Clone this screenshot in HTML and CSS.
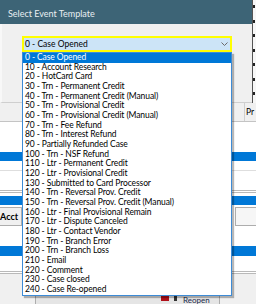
FILE: index.html
```html
<!DOCTYPE html>
<html lang="en">
<head>
    <meta charset="UTF-8">
    <meta name="viewport" content="width=device-width, initial-scale=1.0">
    <title>Select Event Template</title>

    <link rel="stylesheet" href="styles.css">
</head>
<body>
    <div class="app">
        <div class="app-top">
            <div class="edge">
                <span class="mark"></span>
                <span class="mark"></span>
                <span class="mark"></span>
                <span class="mark"></span>
                <span class="mark"></span>
                <span class="mark"></span>
                <span class="mark"></span>
            </div>
        </div>
        <div class="grid-head">
            <div class="head-cell">Pr</div>
        </div>
        <div class="blank b30"></div>
        <div class="sel-row"></div>
        <div class="blank b9 line-below"></div>
        <div class="blank b19"></div>
        <div class="dbl-line"></div>
        <div class="blank b3"></div>
        <div class="sel-row"></div>
        <div class="blank b2"></div>
        <div class="btn-row">
            <div class="acct">Acct</div>
            <div class="btn-right"></div>
        </div>
        <div class="blank b20"></div>
        <div class="sel-row tall"></div>
        <div class="blank b15"></div>
        <div class="dbl-line"></div>
        <div class="footer">
            <div class="foot-btn">
                <span class="x-icon"></span>
                <span class="doc-icon"></span>
                <span class="foot-text">Reopen</span>
            </div>
        </div>
    </div>

    <div class="dialog">
        <div class="titlebar">Select Event Template</div>
        <div class="dlg-body">
            <div class="combo">
                <span class="combo-text">0 - Case Opened</span>
                <svg class="chev" width="7" height="4" viewBox="0 0 7 4">
                    <polyline points="0.5,0.5 3.5,3.5 6.5,0.5" fill="none" stroke="#6b6b6b" stroke-width="1"/>
                </svg>
            </div>
        </div>
    </div>

    <div class="droplist">
        <div class="opt active">0 - Case Opened</div>
        <div class="opt">10 - Account Research</div>
        <div class="opt">20 - HotCard Card</div>
        <div class="opt">30 - Trn - Permanent Credit</div>
        <div class="opt">40 - Trn - Permanent Credit (Manual)</div>
        <div class="opt">50 - Trn - Provisional Credit</div>
        <div class="opt">60 - Trn - Provisional Credit (Manual)</div>
        <div class="opt">70 - Trn - Fee Refund</div>
        <div class="opt">80 - Trn - Interest Refund</div>
        <div class="opt">90 - Partially Refunded Case</div>
        <div class="opt">100 - Trn - NSF Refund</div>
        <div class="opt">110 - Ltr - Permanent Credit</div>
        <div class="opt">120 - Ltr - Provisional Credit</div>
        <div class="opt">130 - Submitted to Card Processor</div>
        <div class="opt">140 - Trn - Reversal Prov. Credit</div>
        <div class="opt">150 - Trn - Reversal Prov. Credit (Manual)</div>
        <div class="opt">160 - Ltr - Final Provisional Remain</div>
        <div class="opt">170 - Ltr - Dispute Canceled</div>
        <div class="opt">180 - Ltr - Contact Vendor</div>
        <div class="opt">190 - Trn - Branch Error</div>
        <div class="opt">200 - Trn - Branch Loss</div>
        <div class="opt">210 - Email</div>
        <div class="opt">220 - Comment</div>
        <div class="opt">230 - Case closed</div>
        <div class="opt">240 - Case Re-opened</div>
    </div>
</body>
</html>
```

FILE: styles.css
```css
body {
    margin: 0;
    width: 256px;
    height: 304px;
    overflow: hidden;
    position: relative;
    font-family: Lato, "Liberation Sans", Arial, sans-serif;
    font-size: 8.5px;
    color: #000;
}

/* the application behind the dialog */
.app {
    display: flex;
    flex-direction: column;
    height: 304px;
    background: #fff;
}

.app-top {
    height: 103px;
    flex: 0 0 auto;
    background: #f0f0f0;
    display: flex;
    justify-content: flex-end;
}

.edge {
    width: 3px;
    padding: 5px 0 0 1px;
    background: #f7f7f7;
    display: flex;
    flex-direction: column;
    gap: 11.5px;
}

.mark {
    width: 2px;
    height: 3px;
    background: #222;
}

.grid-head {
    height: 18px;
    flex: 0 0 auto;
    background: #f0f0f0;
    border-bottom: 1px solid #c4c4c4;
    display: flex;
    justify-content: flex-end;
}

.head-cell {
    width: 10px;
    border-left: 1px solid #cfcfcf;
    padding-left: 1px;
    line-height: 18px;
    white-space: nowrap;
}

.blank { flex: 0 0 auto; }
.b2 { height: 2px; }
.b3 { height: 3px; }
.b9 { height: 9px; }
.b15 { height: 15px; }
.b19 { height: 19px; }
.b20 { height: 20px; }
.b30 { height: 30px; }

.line-below {
    border-bottom: 1px solid #dedede;
}

.sel-row {
    height: 9px;
    flex: 0 0 auto;
    background: #0078d7;
}

.sel-row.tall {
    height: 10px;
}

.dbl-line {
    height: 1px;
    flex: 0 0 auto;
    border-top: 1px solid #b9b9b9;
    border-bottom: 1px solid #b9b9b9;
}

.btn-row {
    height: 19px;
    flex: 0 0 auto;
    display: flex;
    justify-content: space-between;
}

.acct {
    width: 21px;
    border: 1px solid #adadad;
    border-left: 0;
    background: #f0f0f0;
    font-weight: bold;
    font-size: 9px;
    line-height: 17px;
    white-space: nowrap;
}

.btn-right {
    width: 20px;
    border: 1px solid #adadad;
    border-right: 0;
    background: #f6f6f6;
}

.footer {
    flex: 1 1 auto;
    background: #f0f0f0;
    padding: 19px 0 0 35px;
}

.foot-btn {
    width: 185px;
    height: 14px;
    border: 1px solid #adadad;
    background: #e5e5e5;
    display: flex;
    align-items: flex-start;
    padding: 2px 0 0 125px;
    box-sizing: border-box;
    gap: 6px;
}

.x-icon {
    width: 8px;
    height: 5px;
    background: #b0101a;
}

.doc-icon {
    width: 3px;
    height: 5px;
    background: #333;
    margin-left: -1px;
}

.foot-text {
    font-size: 8px;
    line-height: 8px;
    color: #1a2a4a;
    white-space: nowrap;
}

/* dialog window */
.dialog {
    position: absolute;
    left: 0;
    top: 0;
    width: 253px;
    height: 103px;
    border-right: 1px solid #555;
    box-sizing: border-box;
    display: flex;
    flex-direction: column;
}

.titlebar {
    height: 24px;
    background: #3d6476;
    color: #e9eff2;
    font-size: 9px;
    padding: 8px 0 0 8px;
    box-sizing: border-box;
    white-space: nowrap;
}

.dlg-body {
    flex: 1 1 auto;
    background: #f0f0f0;
    border-left: 2px solid #f8f8f8;
    border-bottom: 1px solid #cfcfcf;
    padding: 12px 0 0 20px;
}

.combo {
    width: 210px;
    height: 16px;
    box-sizing: border-box;
    border: 2px solid #ffff00;
    background: #cce4f7;
    display: flex;
    align-items: center;
    justify-content: space-between;
    padding: 0 2px 0 1px;
}

.combo-text {
    line-height: 12px;
    white-space: nowrap;
}

/* open drop-down list */
.droplist {
    position: absolute;
    left: 22px;
    top: 52px;
    width: 210px;
    box-sizing: border-box;
    border: 1px solid #3d8bd6;
    background: #fff;
    box-shadow: 2px 2px 1px rgba(0, 0, 0, 0.28);
}

.opt {
    height: 9.68px;
    line-height: 9.68px;
    padding-left: 2px;
    letter-spacing: -0.1px;
    white-space: nowrap;
    overflow: hidden;
}

.opt.active {
    background: #0078d7;
    color: #fff;
}
```
